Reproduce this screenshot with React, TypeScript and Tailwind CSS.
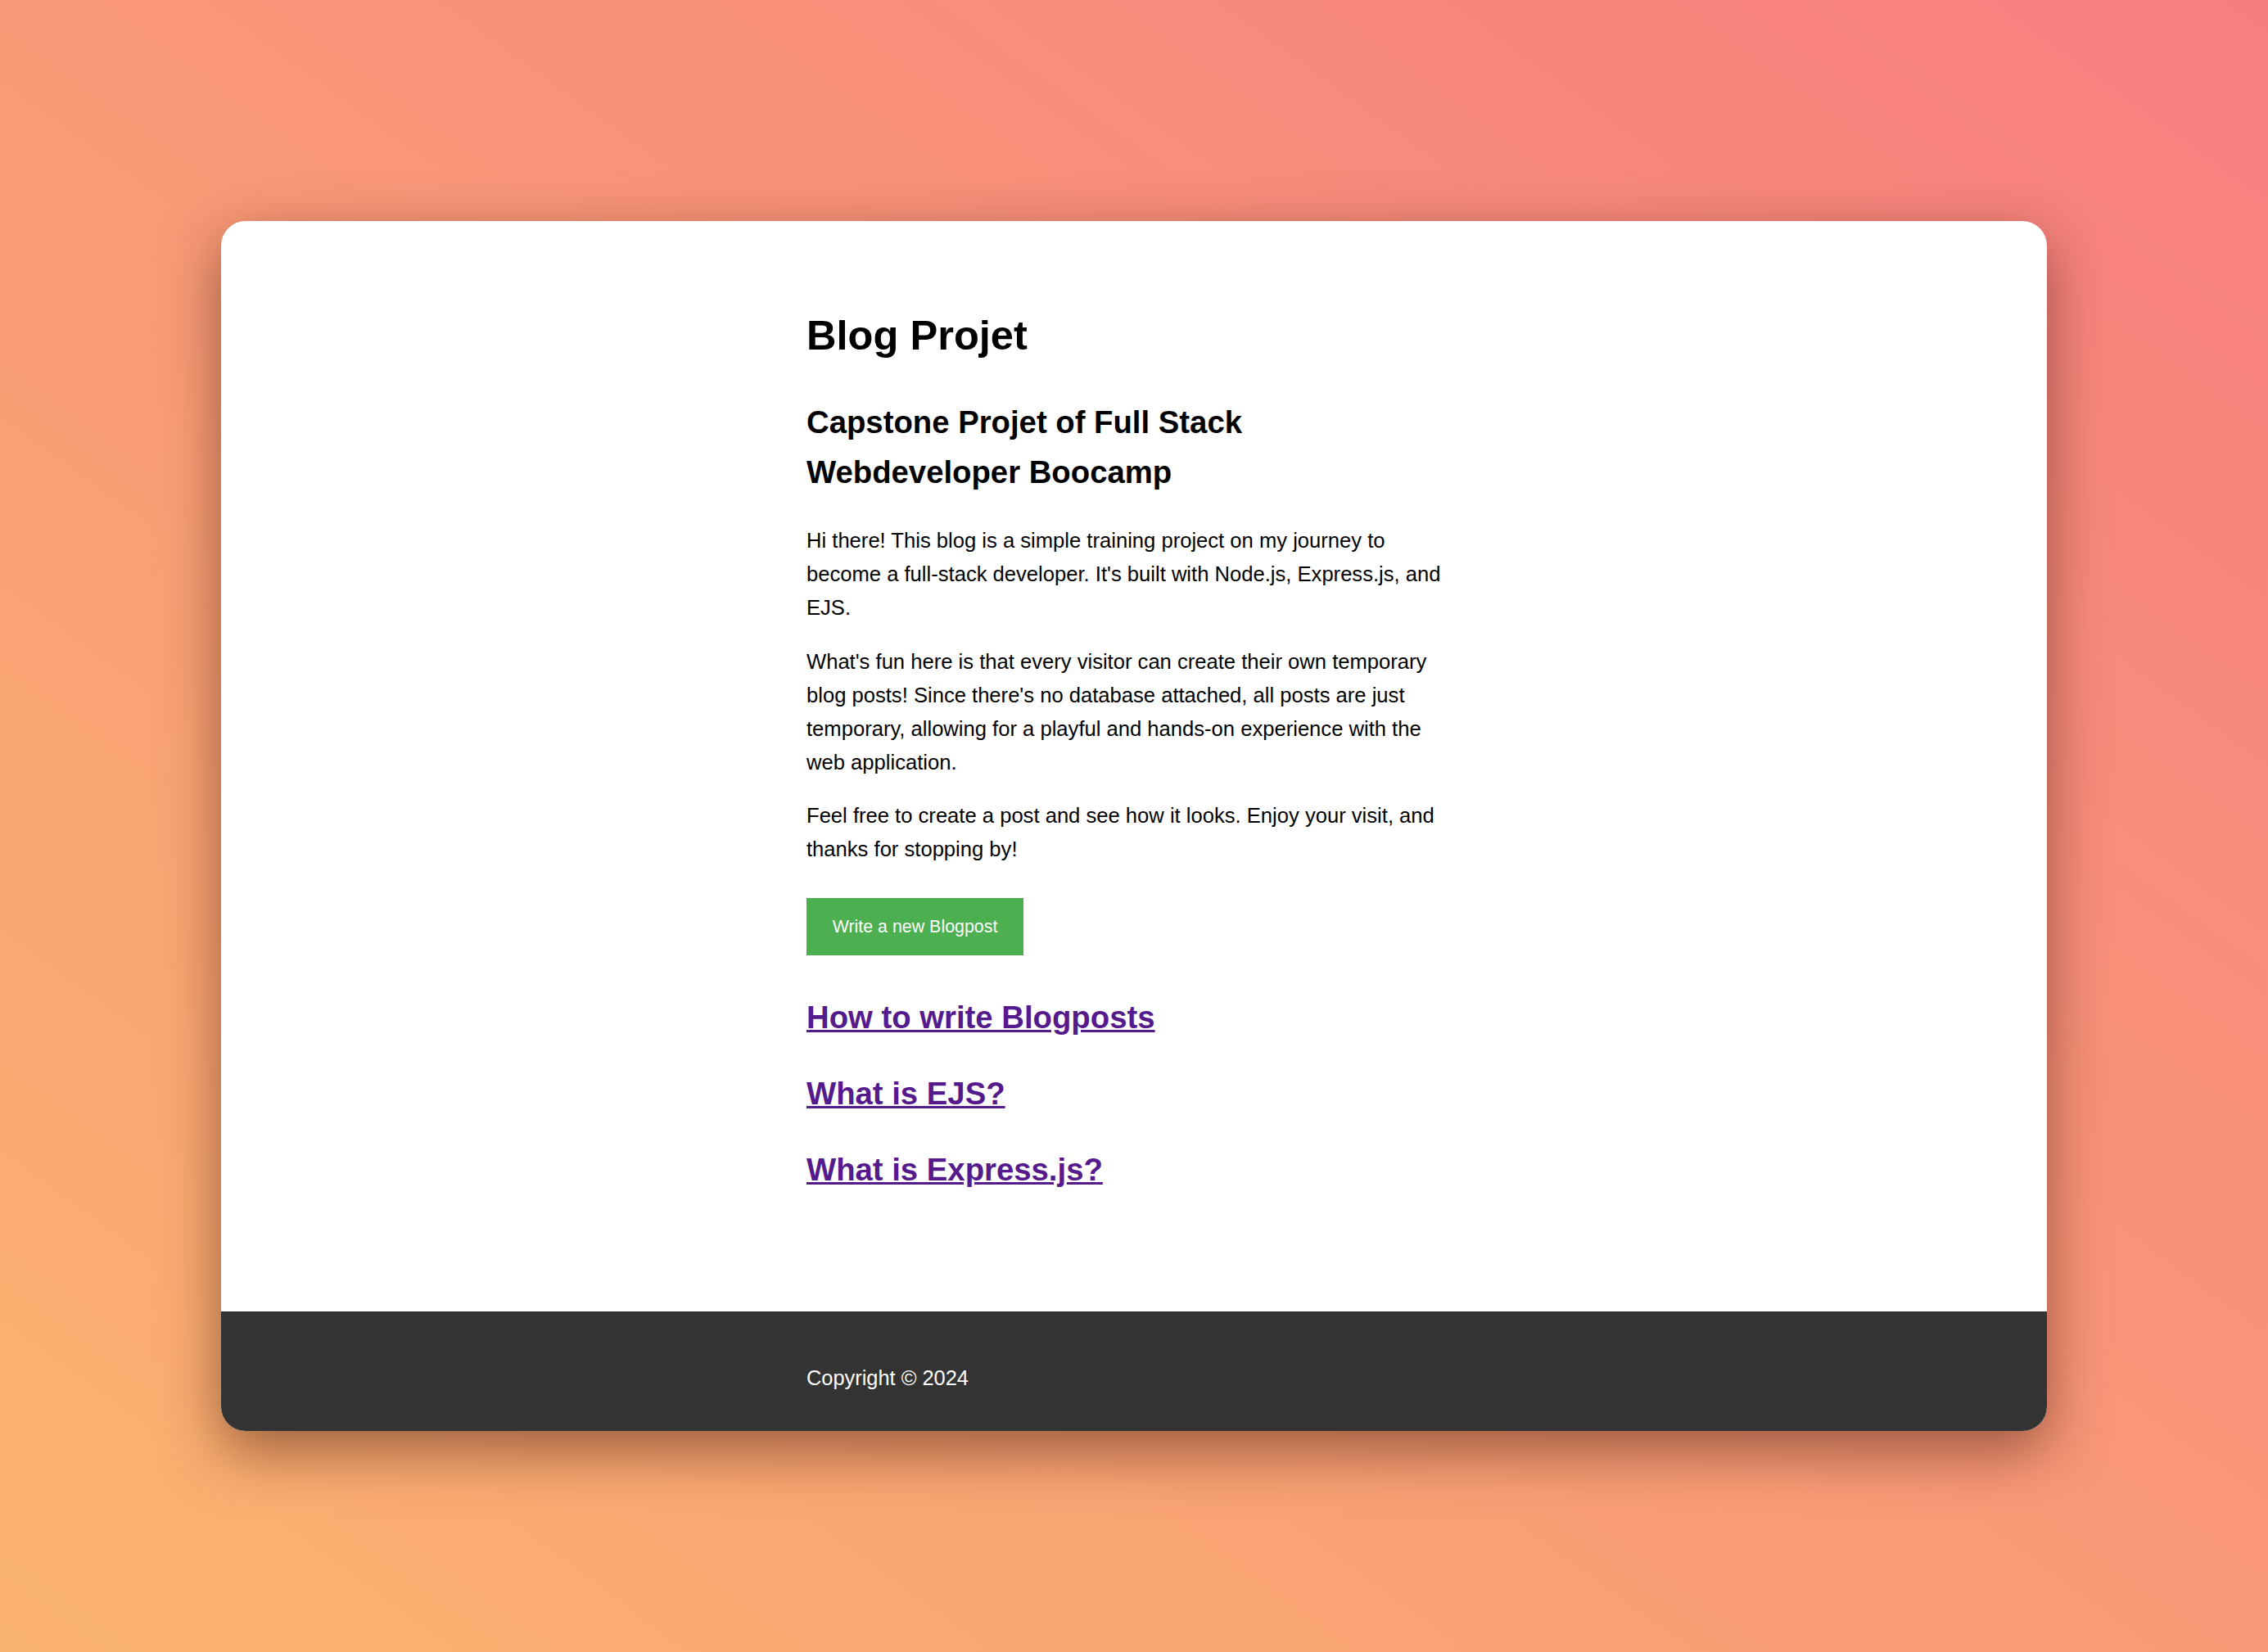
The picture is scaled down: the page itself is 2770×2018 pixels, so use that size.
export default function App() {
  const links = ["How to write Blogposts", "What is EJS?", "What is Express.js?"];

  return (
    <div className="flex h-[2018px] w-full justify-center bg-[linear-gradient(to_top_right,#fbb46f,#f77e7f)] pt-[270px] font-['Liberation_Sans',Arial,sans-serif]">
      <div className="flex h-[1478px] w-[2230px] flex-col overflow-hidden rounded-[30px] bg-white shadow-[0_24px_70px_rgba(60,20,10,0.5)]">
        <main className="flex-1">
          <div className="mx-auto w-[800px] pt-[110px] text-black">
            <h1 className="text-[50.6px] font-bold leading-[60px]">Blog Projet</h1>

            <h2 className="mt-[44.7px] max-w-[785px] text-[38.3px] font-bold leading-[61.6px]">
              Capstone Projet of Full Stack Webdeveloper Boocamp
            </h2>

            <div className="mt-[32px] max-w-[795px] space-y-[24.8px] text-[25.6px] leading-[41px]">
              <p>
                Hi there! This blog is a simple training project on my journey to
                become a full-stack developer. It's built with Node.js, Express.js,
                and EJS.
              </p>
              <p>
                What's fun here is that every visitor can create their own temporary
                blog posts! Since there's no database attached, all posts are just
                temporary, allowing for a playful and hands-on experience with the
                web application.
              </p>
              <p>
                Feel free to create a post and see how it looks. Enjoy your visit, and
                thanks for stopping by!
              </p>
            </div>

            <button className="mt-[38.8px] flex h-[70px] w-[265px] items-center justify-center bg-[#4caf50] text-[21.4px] text-white">
              Write a new Blogpost
            </button>

            <div className="mt-[45px] flex flex-col gap-[31.4px]">
              {links.map((title) => (
                <h2 key={title} className="text-[38.3px] font-bold leading-[61.6px]">
                  <a href="#" className="text-[#551a8b] underline">
                    {title}
                  </a>
                </h2>
              ))}
            </div>
          </div>
        </main>

        <footer className="h-[146px] bg-[#333333]">
          <div className="mx-auto w-[800px] pt-[60.5px]">
            <p className="text-[25.4px] leading-[41.4px] text-white">Copyright © 2024</p>
          </div>
        </footer>
      </div>
    </div>
  );
}
